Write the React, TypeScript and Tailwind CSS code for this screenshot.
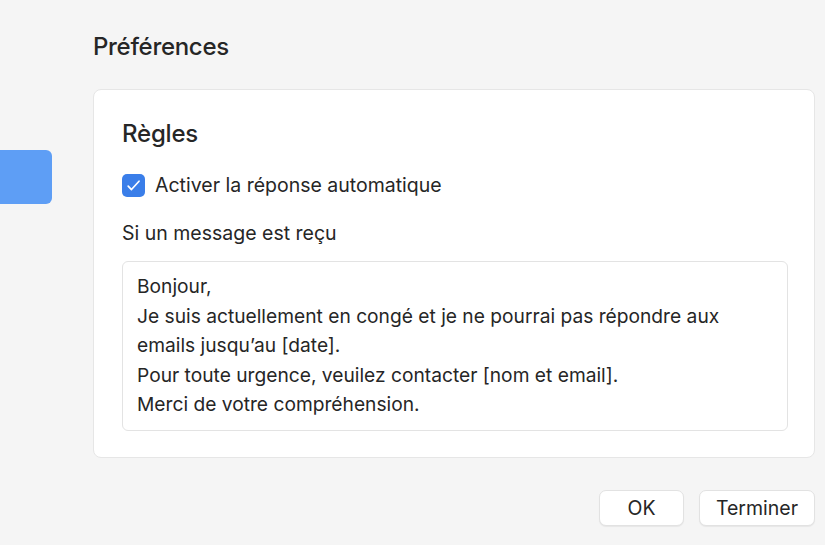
export default function App() {
  return (
    <div
      className="relative h-[545px] w-[825px] overflow-hidden bg-[#f5f5f5] text-[#262626]"
      style={{ fontFamily: "Inter, 'Noto Sans', sans-serif" }}
    >
      <div className="absolute left-0 top-[150px] h-[54px] w-[52px] rounded-r-[6px] bg-[#5e9ef5]" />

      <div className="pl-[93px] pr-[10px] pt-[31px]">
        <h1 className="text-[24px] font-medium leading-[32px] tracking-[-0.3px]">Préférences</h1>

        <div className="mt-[26px] h-[369px] rounded-[8px] border border-[#e6e6e6] bg-white pl-[28px] pr-[26px] pt-[28px]">
          <h2 className="text-[24px] font-medium leading-[32px] tracking-[-0.2px]">Règles</h2>

          <label className="mt-[22px] flex items-center gap-[10px]">
            <span className="flex h-[23px] w-[23px] items-center justify-center rounded-[5px] bg-[#3a7ee9]">
              <svg width="17" height="17" viewBox="0 0 16 16" fill="none">
                <path d="M3 8.6l3.1 3.2L13.2 4" stroke="white" strokeWidth="1.6" strokeLinecap="round" strokeLinejoin="round" />
              </svg>
            </span>
            <span className="text-[19.5px] leading-[26px]">Activer la réponse automatique</span>
          </label>

          <div className="mt-[22px] text-[19.5px] leading-[26px]">Si un message est reçu</div>

          <div className="mt-[15px] h-[170px] rounded-[6px] border border-[#e3e3e3] px-[14px] pt-[10px] text-[19.2px] leading-[29.5px]">
            <div>Bonjour,</div>
            <div>Je suis actuellement en congé et je ne pourrai pas répondre aux</div>
            <div>emails jusqu’au [date].</div>
            <div>Pour toute urgence, veuilez contacter [nom et email].</div>
            <div>Merci de votre compréhension.</div>
          </div>
        </div>

        <div className="mt-[32px] flex justify-end gap-[15px]">
          <button className="h-[36px] w-[85px] rounded-[7px] border border-[#e2e2e2] bg-white pt-[1px] text-[19.5px] shadow-[0_1px_1px_rgba(0,0,0,0.06)]">
            OK
          </button>
          <button className="h-[36px] w-[116px] rounded-[7px] border border-[#e2e2e2] bg-white pt-[1px] text-[19.5px] shadow-[0_1px_1px_rgba(0,0,0,0.06)]">
            Terminer
          </button>
        </div>
      </div>
    </div>
  );
}
